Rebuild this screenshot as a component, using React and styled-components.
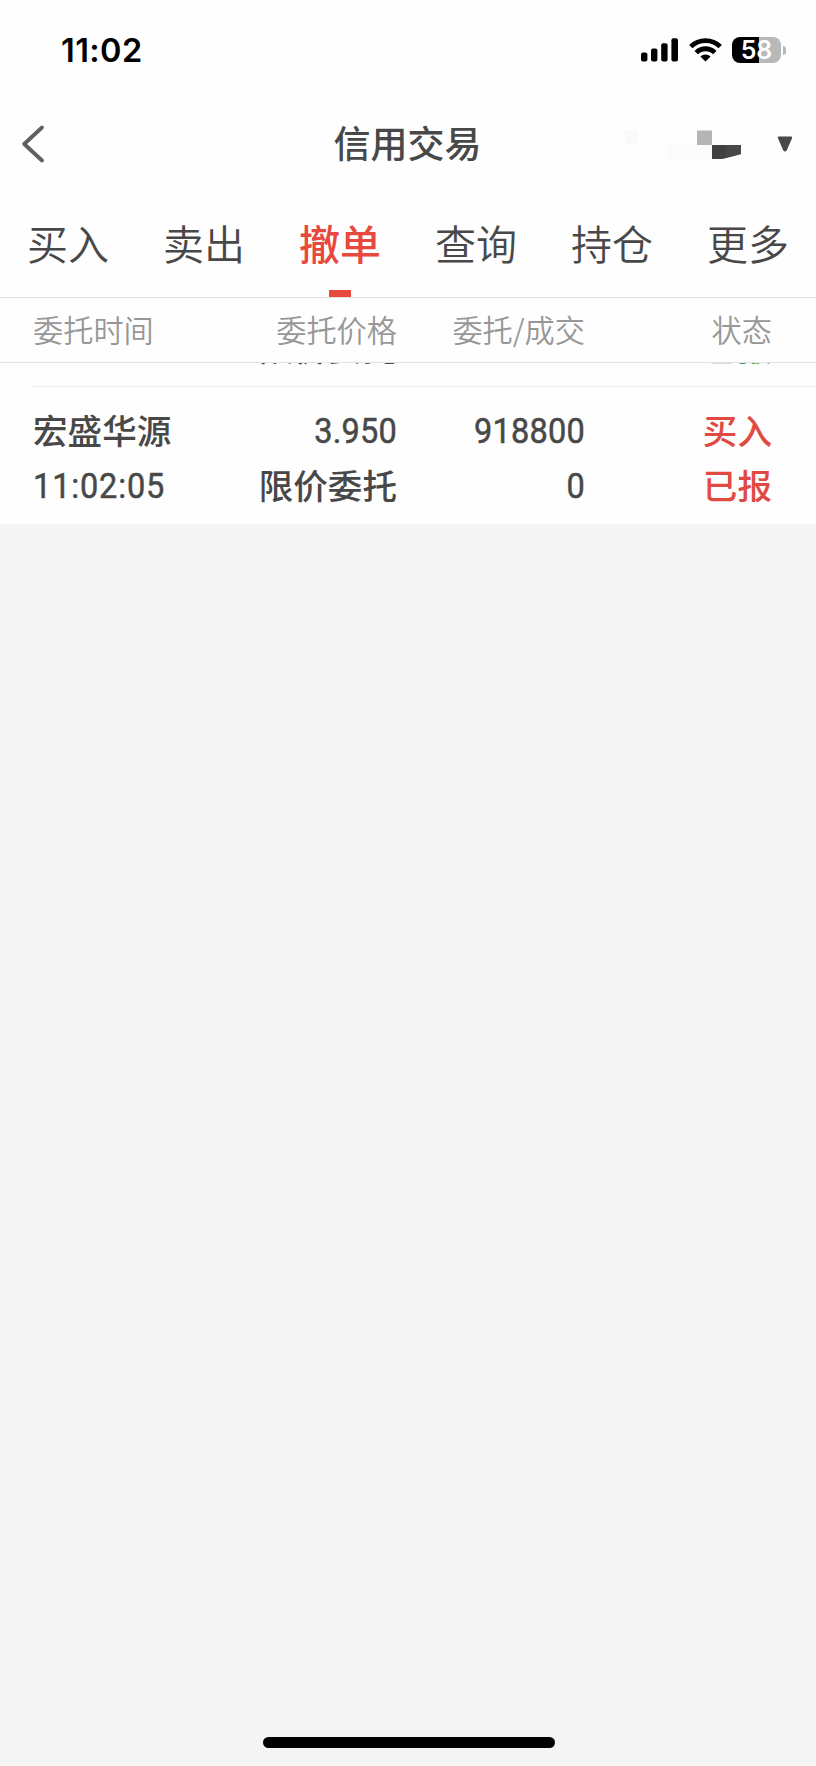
import React from 'react'
import styled, { createGlobalStyle } from "styled-components"

const GlobalStyle = createGlobalStyle`
  * {
    box-sizing: border-box;
  }

  body {
    margin: 0;
    background-color: #f4f4f4;
    font-family: "Noto Sans CJK SC", "Noto Sans", sans-serif;
    color: #484848;
  }
`;

const Screen = styled.div`
  display: flex;
  flex-direction: column;
  width: 816px;
  height: 1766px;
  background-color: #f4f4f4;
  overflow: hidden;
`;

const StatusBar = styled.div`
  display: flex;
  justify-content: space-between;
  align-items: center;
  height: 100px;
  padding: 0 30px 0 61px;
  background-color: #fefefe;
`;

const Clock = styled.span`
  padding-top: 2px;
  font-family: Inter, "Liberation Sans", sans-serif;
  font-size: 32.5px;
  font-weight: 600;
  line-height: 40px;
  letter-spacing: 0.4px;
  color: #000;
`;

const StatusIcons = styled.div`
  display: flex;
  align-items: center;
  gap: 10px;
`;

const Battery = styled.div`
  display: flex;
  align-items: center;
  gap: 2px;
`;

const BatteryBody = styled.div`
  width: 49px;
  height: 26px;
  border-radius: 8px;
  background: linear-gradient(to right, #000 ${props => props.$level}%, #b9b9b9 ${props => props.$level}%);
  font-family: Inter, "Liberation Sans", sans-serif;
  font-size: 25px;
  font-weight: 600;
  line-height: 27px;
  text-align: center;
  color: #fff;
`;

const BatteryCap = styled.div`
  width: 3px;
  height: 9px;
  border-radius: 0 4px 4px 0;
  background-color: #b9b9b9;
`;

const NavBar = styled.div`
  display: grid;
  grid-template-columns: 1fr auto 1fr;
  align-items: center;
  height: 88px;
  padding: 0 23px 0 21px;
  background-color: #fefefe;
`;

const Title = styled.h1`
  margin: 0;
  padding: 0 0 4px 1px;
  font-size: 37px;
  font-weight: 500;
  line-height: 40px;
`;

const Account = styled.div`
  display: flex;
  justify-content: flex-end;
  align-items: center;
  gap: 36px;
`;

const Tabs = styled.div`
  display: grid;
  grid-template-columns: repeat(6, 1fr);
  height: 110px;
  border-bottom: 1px solid #e2e2e2;
  background-color: #fefefe;
`;

const Tab = styled.div`
  display: flex;
  flex-direction: column;
  align-items: center;
  justify-content: space-between;
  padding-top: 30px;
  font-size: 41px;
  font-weight: ${props => props.$active ? 500 : 350};
  line-height: 48px;
  color: ${props => props.$active ? "#e8493f" : "#484848"};
`;

const Marker = styled.div`
  width: 22px;
  height: 7px;
  background-color: #e8493f;
`;

const Columns = styled.div`
  display: grid;
  grid-template-columns: 180px 184px 188px 187px;
  padding-left: 33px;
`;

const TableHead = styled(Columns)`
  height: 65px;
  align-items: center;
  padding-bottom: 3px;
  border-bottom: 1px solid #e2e2e2;
  background-color: #fefefe;
  font-size: 30.2px;
  font-weight: 350;
  line-height: 40px;
  color: #979797;
`;

// the list is scrolled, so the row above shows only its bottom edge
const List = styled.div`
  display: flex;
  flex-direction: column;
  justify-content: flex-end;
  height: 161px;
  background-color: #fefefe;
  overflow: hidden;
`;

const Row = styled(Columns)`
  flex: none;
  height: 138px;
  align-content: end;
  row-gap: 11px;
  padding-bottom: 18px;
  background: linear-gradient(#efefef, #efefef) 30px 0 / 100% 1px no-repeat;
`;

const Cell = styled.div`
  font-size: 34.6px;
  font-weight: 500;
  line-height: 44px;
  text-align: ${props => props.$left ? "left" : "right"};
  color: ${props => props.$color || "#484848"};
`;

const HeadCell = styled.div`
  text-align: ${props => props.$left ? "left" : "right"};
`;

const Num = styled(Cell)`
  padding-top: 6px;
  font-family: Roboto, "Noto Sans CJK SC", sans-serif;
  font-size: 35px;
  font-weight: 400;
  line-height: 38px;
  letter-spacing: ${props => props.$left ? "0.9px" : "0.2px"};
  transform: scaleX(0.93);
  transform-origin: ${props => props.$left ? "left" : "right"};
  -webkit-text-stroke: 0.5px #484848;
`;

const Bottom = styled.div`
  display: flex;
  flex: 1;
  align-items: flex-end;
  justify-content: center;
  padding: 0 0 18px 1px;
`;

const HomeBar = styled.div`
  width: 292px;
  height: 11px;
  border-radius: 6px;
  background-color: #000;
`;

const tabs = ["买入", "卖出", "撤单", "查询", "持仓", "更多"];

export default function App() {
  return (
    <Screen>
      <GlobalStyle />
      <StatusBar>
        <Clock>11:02</Clock>
        <StatusIcons>
          <svg width="38" height="24" viewBox="0 0 38 24">
            <rect x="0" y="14.5" width="6.4" height="9" rx="2" />
            <rect x="10" y="10.5" width="6.4" height="13" rx="2" />
            <rect x="20.2" y="5.3" width="6.4" height="18.2" rx="2" />
            <rect x="30.4" y="0.3" width="6.6" height="23.2" rx="2" />
          </svg>
          <svg width="33" height="24" viewBox="0 0 33 24">
            <g fill="none" stroke="#000" strokeWidth="4.8">
              <path d="M1.8 8.6a21 21 0 0 1 29.4 0" />
              <path d="M7.2 14.6a13.2 13.2 0 0 1 18.6 0" />
            </g>
            <path d="M16.5 23.6l-5.1-5.1a7.2 7.2 0 0 1 10.2 0z" />
          </svg>
          <Battery>
            <BatteryBody $level={56}>58</BatteryBody>
            <BatteryCap />
          </Battery>
        </StatusIcons>
      </StatusBar>

      <NavBar>
        <svg width="24" height="40" viewBox="0 0 24 40">
          <path d="M21 3.5L3.2 20L21 36.5" fill="none" stroke="#606060" strokeWidth="3.8" strokeLinecap="round" strokeLinejoin="round" />
        </svg>
        <Title>信用交易</Title>
        <Account>
          {/* masked account number */}
          <svg width="126" height="30" viewBox="0 0 126 30">
            <rect x="10" y="1" width="13" height="14" fill="#fafafa" />
            <rect x="53" y="16" width="44" height="14" fill="#fbfbfb" />
            <rect x="82" y="1.5" width="15" height="14.5" fill="#b5b5b5" />
            <path d="M97 16h29v9q-9 2.5-15 4q-4 1.5-14 1z" fill="#404040" />
            <path d="M111 16h15v9l-15 4z" fill="#484848" />
          </svg>
          <svg width="16" height="16" viewBox="0 0 16 16">
            <path d="M1.8 1.5h12.4L8.8 14q-0.8 1-1.6 0z" fill="#484848" stroke="#484848" strokeWidth="2" strokeLinejoin="round" />
          </svg>
        </Account>
      </NavBar>

      <Tabs>
        {tabs.map(name => (
          <Tab key={name} $active={name === "撤单"}>
            {name}
            {name === "撤单" && <Marker />}
          </Tab>
        ))}
      </Tabs>

      <TableHead>
        <HeadCell $left>委托时间</HeadCell>
        <HeadCell>委托价格</HeadCell>
        <HeadCell>委托/成交</HeadCell>
        <HeadCell>状态</HeadCell>
      </TableHead>

      <List>
        <Row>
          <Cell />
          <Cell>限价委托</Cell>
          <Cell />
          <Cell $color="#4c9a4c">已报</Cell>
        </Row>
        <Row>
          <Cell $left>宏盛华源</Cell>
          <Num>3.950</Num>
          <Num>918800</Num>
          <Cell $color="#e04a43">买入</Cell>
          <Num $left>11:02:05</Num>
          <Cell>限价委托</Cell>
          <Num>0</Num>
          <Cell $color="#e04a43">已报</Cell>
        </Row>
      </List>

      <Bottom>
        <HomeBar />
      </Bottom>
    </Screen>
  );
}
